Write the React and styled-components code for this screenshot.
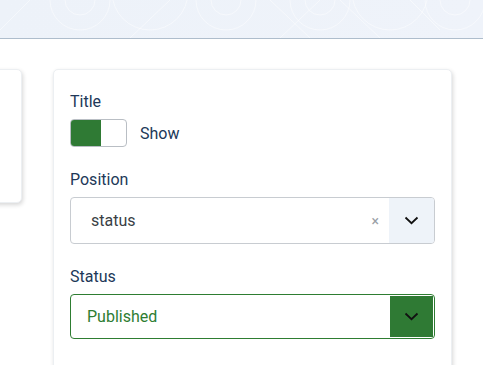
import React from "react";
import styled, { createGlobalStyle } from "styled-components";

const GlobalStyle = createGlobalStyle`
  html, body {
    margin: 0;
    padding: 0;
    background: #fff;
    font-family: Roboto, "Liberation Sans", sans-serif;
    overflow: hidden;
  }
`;

const Header = styled.header`
  position: relative;
  height: 38px;
  background: linear-gradient(90deg, #edf2f9, #eff3fa);
  border-bottom: 1px solid #aebdcc;
  overflow: hidden;
`;

const Pattern = styled.svg`
  position: absolute;
  inset: 0;
  width: 100%;
  height: 100%;
`;

const Main = styled.main`
  display: flex;
  align-items: flex-start;
  gap: 31px;
  margin-left: -178px;
  padding-top: 30px;
`;

const Card = styled.section`
  flex: none;
  width: ${(p) => p.$width}px;
  height: ${(p) => (p.$height ? `${p.$height}px` : "auto")};
  box-sizing: border-box;
  background: #fff;
  border: 1px solid #eceff2;
  border-radius: 5px;
  box-shadow: 1px 2px 4px rgba(0, 0, 0, 0.16);
  padding: 20px 16px 40px;
`;

const Field = styled.div`
  margin-bottom: 21px;
`;

const Label = styled.label`
  display: block;
  font-size: 16px;
  line-height: 24px;
  color: #213858;
  margin-bottom: 5px;
`;

const SwitchRow = styled.div`
  display: flex;
  align-items: center;
  gap: 13px;
`;

const Switch = styled.div`
  width: 57px;
  height: 28px;
  box-sizing: border-box;
  border: 1px solid #b9bec4;
  border-radius: 4px;
  overflow: hidden;
  display: flex;
`;

const SwitchHalf = styled.span`
  width: 30px;
  background: #2f7a34;
`;

const SwitchText = styled.span`
  font-size: 16px;
  color: #213858;
`;

const Select = styled.div`
  display: flex;
  align-items: stretch;
  height: ${(p) => p.$height}px;
  box-sizing: border-box;
  border: 1px solid ${(p) => (p.$success ? "#2e7d32" : "#c8ccd1")};
  border-radius: 4px;
  padding: ${(p) => (p.$success ? "1px" : "0")};
  overflow: hidden;
`;

const Value = styled.span`
  flex: 1;
  display: flex;
  align-items: center;
  padding-left: ${(p) => p.$pad}px;
  font-size: 16px;
  color: ${(p) => (p.$success ? "#2e7d32" : "#3a3f45")};
`;

const Clear = styled.span`
  display: flex;
  align-items: center;
  padding-right: 10px;
  font-size: 14px;
  color: #9aa0a6;
`;

const Toggle = styled.span`
  width: ${(p) => (p.$success ? 43 : 45)}px;
  display: flex;
  align-items: center;
  justify-content: center;
  background: ${(p) => (p.$success ? "#2f7a34" : "#eef3f9")};
`;

const Chevron = () => (
  <svg width="15" height="9" viewBox="0 0 15 9">
    <path d="M1.5 1.5 L7.5 7.2 L13.5 1.5" fill="none" stroke="#111" strokeWidth="1.8" />
  </svg>
);

export default function App() {
  const circles = [80, 226, 320, 455];
  return (
    <>
      <GlobalStyle />
      <Header>
        <Pattern viewBox="0 0 483 38" preserveAspectRatio="none">
          <g fill="none" stroke="#ffffff" strokeOpacity="0.6" strokeWidth="0.8">
            {circles.map((cx) => (
              <g key={cx}>
                <circle cx={cx} cy="0" r="15" />
                <circle cx={cx} cy="0" r="30" />
              </g>
            ))}
            <path d="M0 30 L30 0 M130 38 L170 0 M270 0 L310 38 M280 38 L320 0 M340 0 L380 38 M410 0 L440 30" />
            <circle cx="150" cy="-8" r="38" />
            <circle cx="390" cy="-8" r="38" />
          </g>
        </Pattern>
      </Header>
      <Main>
        <Card $width={200} $height={134} />
        <Card $width={399}>
          <Field>
            <Label>Title</Label>
            <SwitchRow>
              <Switch>
                <SwitchHalf />
              </Switch>
              <SwitchText>Show</SwitchText>
            </SwitchRow>
          </Field>
          <Field>
            <Label>Position</Label>
            <Select $height={47}>
              <Value $pad={20}>status</Value>
              <Clear>×</Clear>
              <Toggle>
                <Chevron />
              </Toggle>
            </Select>
          </Field>
          <Field>
            <Label>Status</Label>
            <Select $height={45} $success>
              <Value $pad={15} $success>
                Published
              </Value>
              <Toggle $success>
                <Chevron />
              </Toggle>
            </Select>
          </Field>
        </Card>
      </Main>
    </>
  );
}
